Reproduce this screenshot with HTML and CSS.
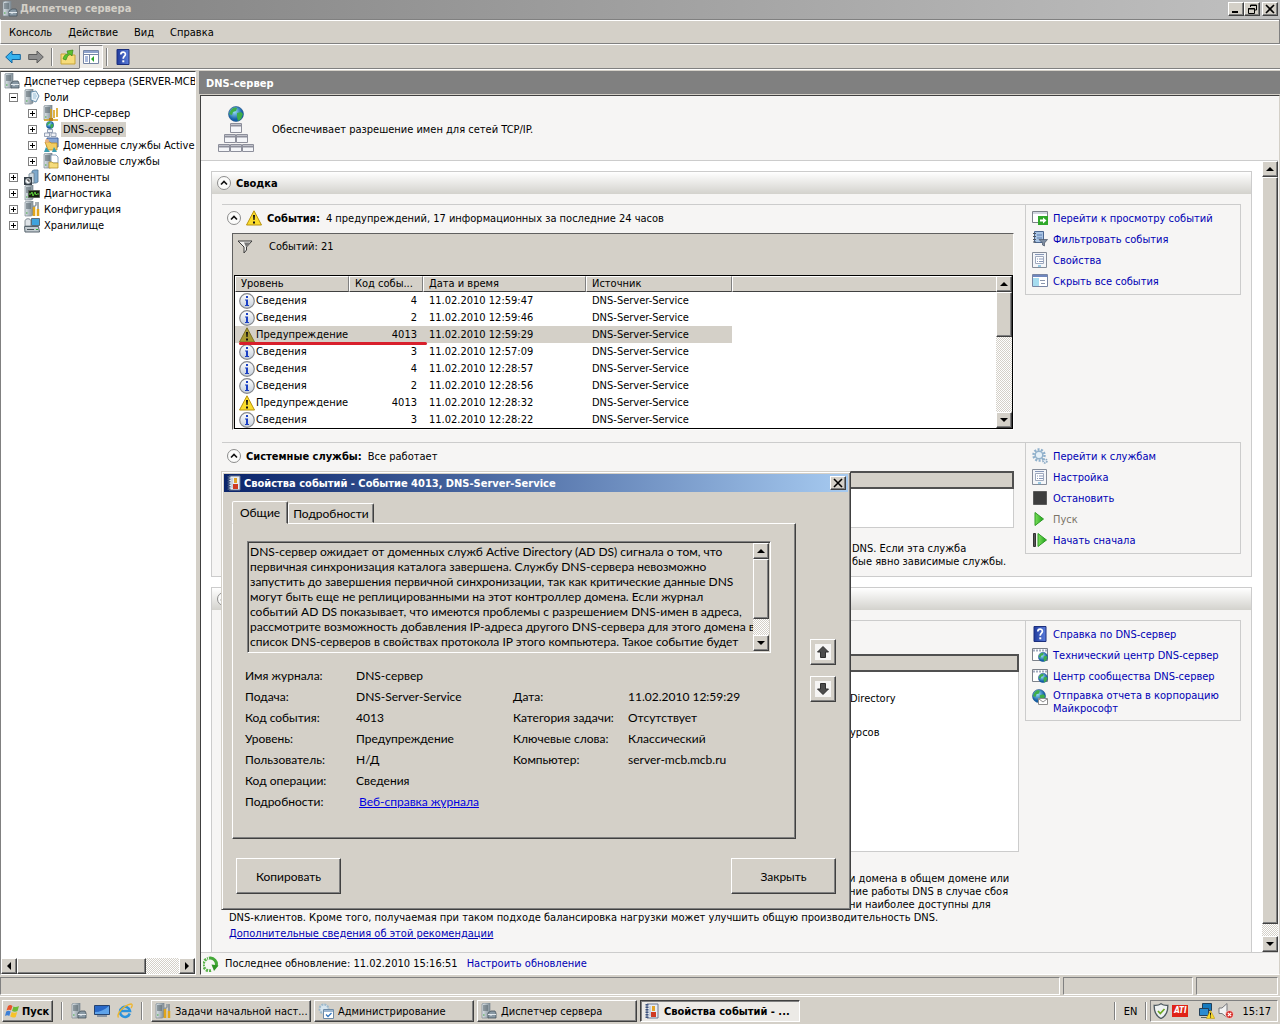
FILE: index.html
```html
<!DOCTYPE html>
<html lang="ru">
<head>
    <meta charset="UTF-8">
    <meta name="viewport" content="width=device-width, initial-scale=1.0">
    <title>Диспетчер сервера</title>
    <link rel="stylesheet" href="styles.css">
</head>
<body>
    <svg class="sprite" aria-hidden="true">
        <defs>
            <linearGradient id="gTower" x1="0" x2="1"><stop offset="0" stop-color="#dfe6ea"/><stop offset="1" stop-color="#7f8d96"/></linearGradient>
            <linearGradient id="gInfo" x1="0" y1="0" x2="0" y2="1"><stop offset="0" stop-color="#fff"/><stop offset="1" stop-color="#c3cdda"/></linearGradient>
            <radialGradient id="gGlobe" cx=".4" cy=".35"><stop offset="0" stop-color="#9be0f5"/><stop offset="1" stop-color="#1560a8"/></radialGradient>
            <linearGradient id="gHelp" x1="0" x2="1"><stop offset="0" stop-color="#203a9c"/><stop offset="1" stop-color="#5c7fdc"/></linearGradient>
            <linearGradient id="gPlay" x1="0" x2="1"><stop offset="0" stop-color="#7ae05a"/><stop offset="1" stop-color="#1fa01a"/></linearGradient>
        </defs>
        <symbol id="tower" viewBox="0 0 16 16">
            <path d="M1 1l2-1h6v14l-2 1H1z" fill="url(#gTower)" stroke="#7b8890" stroke-width=".7"/>
            <path d="M2 3h5M2 5h5M2 7h5" stroke="#4d5a63"/>
            <path d="M2 12h1.500" stroke="#3fa83a"/>
        </symbol>
        <symbol id="globe" viewBox="0 0 16 16">
            <circle cx="8" cy="8" r="7.500" fill="url(#gGlobe)" stroke="#1b4f86" stroke-width=".6"/>
            <path d="M3 4c2-3 5-3 6-2l-1 3-3 1-1 3-3-1zM9 7l4-1 2 2-2 5-3 2-1-4z" fill="#3fae49"/>
        </symbol>
        <symbol id="server" viewBox="0 0 16 16">
            <use href="#tower" width="16" height="16"/>
            <path d="M7 10l3-2h4l1 2v5H7z" fill="#8898a4" stroke="#46545e" stroke-width=".8"/>
            <path d="M7 11.500h8M10 11v2" stroke="#e4eaee"/>
        </symbol>
        <symbol id="roles" viewBox="0 0 16 16">
            <use href="#tower" width="16" height="16"/>
            <path d="M7 3l5-1 3 5-3 6-5-2z" fill="#e9f2f8" stroke="#5d88a6" stroke-width=".9"/>
            <path d="M9 5l3 0M9 7h4M9 9h3" stroke="#86b4cf" stroke-width=".8"/>
        </symbol>
        <symbol id="tools" viewBox="0 0 16 16">
            <use href="#tower" width="16" height="16"/>
            <path d="M8 1v3l2 2 2-2V1" fill="none" stroke="#8c979e" stroke-width="1.500"/>
            <path d="M10 6v9M14 8v7" fill="none" stroke="#e0a51c" stroke-width="2.500"/>
            <path d="M14 1v7" stroke="#707c85" stroke-width="1.300"/>
        </symbol>
        <symbol id="dhcp" viewBox="0 0 16 16">
            <use href="#tower" width="16" height="16"/>
            <path d="M8 4v9M11 5v8M14 3v9M1 15h14" stroke="#d9a21b" stroke-width="1.600"/>
            <path d="M6 13h4v3H6z" fill="#b9821a"/>
        </symbol>
        <symbol id="dns" viewBox="0 0 36 46">
            <use href="#globe" x="10" y="0" width="16" height="16"/>
            <g fill="#f4f5f8" stroke="#8d8f9b"><path d="M12.500 17.500h11v9h-11zM6.500 28.500h11v8h-11zM18.500 28.500h11v8h-11zM.5 38.500h11v7H.5zM12.500 38.500h11v7h-11zM24.500 38.500h11v7h-11z"/></g>
            <path d="M12 19.500h12M6 30.500h24M0 40.500h36" stroke="#8d8f9b" stroke-width="2"/>
        </symbol>
        <symbol id="dnssmall" viewBox="0 0 16 16">
            <use href="#globe" x="3" y="0" width="8" height="8"/>
            <g fill="#eef0f5" stroke="#7f8da6" stroke-width=".8"><path d="M4.500 8.500h5v3h-5zM1.500 12h5v3.500h-5zM8 12h5v3.500H8z"/></g>
        </symbol>
        <symbol id="ad" viewBox="0 0 16 16">
            <path d="M4 1h11v9H4z" fill="#88a5d4" stroke="#42629b"/>
            <path d="M2 5h5l1 1h6v7H5z" fill="#f3cd62" stroke="#bd8b1f" stroke-width=".8"/>
            <circle cx="4" cy="4" r="2" fill="#e9b07c"/><path d="M3 10l4 5H1zM11 10l3 5H9z" fill="#3a9db0"/>
        </symbol>
        <symbol id="files" viewBox="0 0 16 16">
            <use href="#tower" width="16" height="16"/>
            <path d="M8 2h5l2 2v6H8z" fill="#fff" stroke="#6f8ca8" stroke-width=".8"/>
            <path d="M6 9h3l1 1h5v5H6z" fill="#f5dc7c" stroke="#b8962c" stroke-width=".8"/>
        </symbol>
        <symbol id="comp" viewBox="0 0 16 16">
            <path d="M8 2l2-1h4v12l-2 1H8z" fill="#7fa9cc" stroke="#51748f" stroke-width=".8"/>
            <path d="M5 5l2-1h3v10H5z" fill="#cfdbe3" stroke="#70838f" stroke-width=".8"/>
            <path d="M0 8h8v8H0z" fill="#39424a"/><circle cx="4" cy="12" r="2.500" fill="#fff" stroke="#a7b0b7"/><path d="M4 10v2h2" stroke="#222" fill="none"/>
        </symbol>
        <symbol id="diag" viewBox="0 0 16 16">
            <use href="#tower" width="16" height="16"/>
            <path d="M4.500 5.500h11v7h-11z" fill="#15200f" stroke="#5a6258"/>
            <path d="M5 9h2l1-2 1 4 2-4 1 3 1-1h2" fill="none" stroke="#5fd13c"/>
        </symbol>
        <symbol id="stor" viewBox="0 0 16 16">
            <path d="M1 4c0-3 6-3 6 0v5H1z" fill="#dfe4e8" stroke="#68747c" stroke-width=".8"/>
            <path d="M7.500 1.500h8v7h-8z" fill="#3fa3dd" stroke="#5d6d79"/>
            <path d="M.5 9.500h14l1 5.500H1z" fill="#c4ccd1" stroke="#56636c"/><path d="M3 12.500h7" stroke="#4b565d"/><path d="M12 12.500h2" stroke="#2fb02c"/>
        </symbol>
        <symbol id="warn" viewBox="0 0 16 16">
            <path d="M8 .8L15.500 15H.5z" fill="#fbdc2c" stroke="#b8920f" stroke-linejoin="round"/>
            <path d="M7 5h2l-.4 5H7.400zM7 11.500h2v2H7z" fill="#111"/>
        </symbol>
        <symbol id="warnsel" viewBox="0 0 16 16">
            <path d="M8 .8L15.500 15H.5z" fill="#a89a32" stroke="#7e7128" stroke-linejoin="round"/>
            <path d="M7 5h2l-.4 5H7.400zM7 11.500h2v2H7z" fill="#111"/>
        </symbol>
        <symbol id="info" viewBox="0 0 16 16">
            <circle cx="8" cy="8" r="7.300" fill="url(#gInfo)" stroke="#85878c" stroke-width="1.200"/>
            <path d="M7 3h2v2H7zM6 6.500h3V12h1v1H6v-1h1V7.500H6z" fill="#1c41c4"/>
        </symbol>
        <symbol id="help" viewBox="0 0 16 16">
            <path d="M2 .5h12v15H2z" fill="url(#gHelp)" stroke="#1c2f7c"/>
            <path d="M5.800 5.500C5.800 2.300 10.400 2.300 10.400 5.200 10.400 7.200 8.200 7.200 8.200 9.800" fill="none" stroke="#fff" stroke-width="1.700"/>
            <path d="M7.300 11.300h2v2h-2z" fill="#fff"/>
        </symbol>
        <symbol id="chev" viewBox="0 0 14 14">
            <circle cx="7" cy="7" r="6.500" fill="#fbfbfa" stroke="#8c8c8c"/>
            <path d="M4 8.500l3-3 3 3" fill="none" stroke="#111" stroke-width="1.600"/>
        </symbol>
        <symbol id="back" viewBox="0 0 16 16"><path d="M.7 8L7 2v3.500h8.300v5H7V14z" fill="#36b2ee" stroke="#14649e"/></symbol>
        <symbol id="fwd" viewBox="0 0 16 16"><path d="M15.300 8L9 2v3.500H.7v5H9V14z" fill="#8e8e8e" stroke="#5c5c5c"/></symbol>
        <symbol id="folder" viewBox="0 0 16 16">
            <path d="M1 5h5l1 1h8v9H1z" fill="#f7dc7b" stroke="#c7a53a"/>
            <path d="M3 10c1-4 3-5 5-5L7 2l6-1-1 6-2-2c-2 1-3 3-4 6z" fill="#5cc22e" stroke="#2b7d13" stroke-width=".6"/>
        </symbol>
        <symbol id="panel" viewBox="0 0 16 16">
            <path d="M.5 1.500h15v13H.5z" fill="#fff" stroke="#7686a5"/><path d="M1 3h14" stroke="#8ea2cc" stroke-width="2"/>
            <path d="M1 5.500h14M6.500 6v8" stroke="#7686a5"/><path d="M2 8h3M2 10h3M2 12h3" stroke="#5574b8"/><path d="M11 7v6L8 10z" fill="#2aa52a"/>
        </symbol>
        <symbol id="filter" viewBox="0 0 16 16"><path d="M1 2h14L9.500 8v3L7 14V8z" fill="#f1f1ee" stroke="#3b3b3b"/><path d="M7 3.500h6L9 8z" fill="#777"/></symbol>
        <symbol id="goevents" viewBox="0 0 16 16">
            <path d="M.5 1.500h15v11H.5z" fill="#fff" stroke="#7c8189"/><path d="M1 3h14" stroke="#a3abc0"/>
            <path d="M6 6h10v9H6z" fill="#2fa829"/><path d="M8 9.500h3V7.500l3.500 3-3.500 3v-2H8z" fill="#fff"/>
        </symbol>
        <symbol id="filterev" viewBox="0 0 16 16">
            <path d="M2.500.5h9v11h-9z" fill="#a9c4e4" stroke="#4c6790"/><path d="M1 2.500h3M1 5.500h3M1 8.500h3M1 11h3" stroke="#4e5660"/><path d="M5 4h5M5 7h5" stroke="#5f7fae"/>
            <path d="M7 8.500h8.500L12.500 12v3L10.500 14v-2z" fill="#7d8da2" stroke="#4a5565" stroke-width=".7"/>
        </symbol>
        <symbol id="props" viewBox="0 0 16 16">
            <path d="M.5.5h14v15H.5z" fill="#f4f6f9" stroke="#858c99"/><path d="M3.500 4.500h8v7h-8z" fill="#fff" stroke="#9fa9bd"/>
            <path d="M3 2.500h9M5 7h1M7 7h4M5 9.500h1M7 9.500h4" stroke="#8797b8"/><path d="M6 14h3" stroke="#3c9bcb"/>
        </symbol>
        <symbol id="hide" viewBox="0 0 16 16">
            <path d="M.5 1.500h15v12H.5z" fill="#fff" stroke="#7784a3"/><path d="M1 3h14" stroke="#6f86be" stroke-width="2"/>
            <path d="M1 5h6v8H1z" fill="#a6dcef"/><path d="M8 7.500h5M9 10.500h4" stroke="#8b97ae"/>
        </symbol>
        <symbol id="gear" viewBox="0 0 16 16">
            <circle cx="7" cy="7" r="5.500" fill="none" stroke="#8fb0cc" stroke-width="2.500" stroke-dasharray="2 1.400"/>
            <circle cx="7" cy="7" r="3.800" fill="#e6f0f7" stroke="#93b2cb" stroke-width="1.500"/>
            <circle cx="13" cy="13" r="2" fill="#e0eaf2" stroke="#8ca9c2" stroke-width="1.600" stroke-dasharray="1.500 .8"/>
        </symbol>
        <symbol id="stop" viewBox="0 0 16 16"><path d="M1.500 1.500h13v13h-13z" fill="#3e3e3e" stroke="#5b5b5b"/></symbol>
        <symbol id="play" viewBox="0 0 16 16"><path d="M3 1.500L11.500 8 3 14.500z" fill="url(#gPlay)" stroke="#2c9a23"/></symbol>
        <symbol id="restart" viewBox="0 0 16 16"><path d="M1.500 1.500h2v13h-2z" fill="#555" stroke="#333"/><path d="M6 1.500L14.500 8 6 14.500z" fill="url(#gPlay)" stroke="#2c9a23"/></symbol>
        <symbol id="web" viewBox="0 0 16 16">
            <path d="M.5 1.500h15v12H.5z" fill="#fff" stroke="#7c8189"/><path d="M1 3.500h14" stroke="#a3abc0" stroke-width="2" stroke-dasharray="2 1"/>
            <use href="#globe" x="6" y="5" width="10" height="10"/>
        </symbol>
        <symbol id="report" viewBox="0 0 16 16">
            <use href="#globe" x="0" y="0" width="14" height="14"/><path d="M6.500 9.500h9v6h-9z" fill="#fff" stroke="#8c8c8c"/><path d="M7 10l4 3 4-3" fill="none" stroke="#8c8c8c"/>
        </symbol>
        <symbol id="refresh" viewBox="0 0 16 16">
            <path d="M8 14.500A6 6 0 0 1 5 2.500" fill="none" stroke="#57b247" stroke-width="3" stroke-dasharray="2 1"/>
            <path d="M6 2.300a6 6 0 0 1 7 8" fill="none" stroke="#45a838" stroke-width="3"/><path d="M8.500 8.500l7 1-4.500 5.500z" fill="#2f9424"/>
        </symbol>
        <symbol id="journal" viewBox="0 0 16 16">
            <path d="M3 1h11v14H3z" fill="#e7edf4" stroke="#6a7690"/><path d="M3 1v14" stroke="#3e547f" stroke-width="3" stroke-dasharray="1.500 1"/>
            <path d="M8 3h3v5H8z" fill="#e2a42a"/><path d="M7 9h5v5H7z" fill="#cf3a22"/><path d="M6 3v10" stroke="#a9b6c8"/>
        </symbol>
        <symbol id="admin" viewBox="0 0 16 16">
            <circle cx="6" cy="6" r="4.500" fill="#d7e5ee" stroke="#9cb9cc" stroke-width="2" stroke-dasharray="2 1"/>
            <path d="M5.500 6.500h10v9h-10z" fill="#fff" stroke="#6d8aa6"/><path d="M6 8h9" stroke="#9cb7d2" stroke-width="2"/><path d="M8 11.500l2 2 3.500-3.500" fill="none" stroke="#3577be" stroke-width="1.300"/>
        </symbol>
        <symbol id="flag" viewBox="0 0 16 16">
            <path d="M3 3c2-1.500 3-1 4.500 0L6 7.500C5 6.500 3 6.500 1.500 7.500z" fill="#e8532a"/><path d="M8.500 3.500c2 1 3.500.5 5.500-.5l-1.500 5c-2 1-3.500 1-5.500 0z" fill="#6cba36"/>
            <path d="M1.200 8.500c1.500-1 3-1 4.500 0L4.300 13C3 12 1.500 12 0 13z" fill="#3c7fd6"/><path d="M6.700 9c2 1 3.500 1 5.500 0l-1.500 5c-2 1-3.500.5-5.500-.5z" fill="#f6c22b"/>
        </symbol>
        <symbol id="desk" viewBox="0 0 16 16"><path d="M.5 2.500h15v9H.5z" fill="#2867c7" stroke="#26436f"/><path d="M1 9c5 0 9-2 14-6v8H1z" fill="#5fa3ea"/><path d="M3 13h10" stroke="#8a95a3" stroke-width="2"/></symbol>
        <symbol id="ie" viewBox="0 0 16 16">
            <path d="M12.800 10.500A5 5 0 1 1 13 8H4" fill="none" stroke="#2b93dc" stroke-width="2.500"/>
            <path d="M1.500 14.500C-1 11 7 2 14 1c2 0 1 3 0 4" fill="none" stroke="#efb52b" stroke-width="1.300"/>
        </symbol>
        <symbol id="shield" viewBox="0 0 16 16"><path d="M8 .7c2 1.500 4.500 1.800 6.800 1.600C15 8 13 13 8 15.500 3 13 1 8 1.200 2.300 3.500 2.500 6 2.200 8 .7z" fill="#eef1f2" stroke="#4e5a60" stroke-width="1.300"/><path d="M5 8l2.300 2.500L11.500 6" fill="none" stroke="#6da820" stroke-width="1.700"/></symbol>
        <symbol id="net" viewBox="0 0 16 16"><path d="M3.500.5h9v7h-9z" fill="#1479be" stroke="#23405a"/><path d="M.5 5.500h9v7h-9z" fill="#2a8bd0" stroke="#23405a"/><path d="M2 14.500h6" stroke="#566"/><use href="#warn" x="7" y="7" width="9" height="9"/></symbol>
        <symbol id="sound" viewBox="0 0 16 16"><path d="M1 5h3l5-4.500v14L4 10.500H1z" fill="#f2f2f2" stroke="#77797c"/><circle cx="11.500" cy="11.500" r="4" fill="#d62f2a" stroke="#fff" stroke-width=".6"/><path d="M9.800 9.800l3.400 3.400M13.200 9.800l-3.400 3.400" stroke="#fff" stroke-width="1.200"/></symbol>
        <symbol id="up" viewBox="0 0 16 16"><path d="M8 2.500L13.500 8h-3v5.500h-5V8h-3z" fill="#4c4c4c" stroke="#2e2e2e"/></symbol>
        <symbol id="down" viewBox="0 0 16 16"><path d="M8 13.500L2.500 8h3V2.500h5V8h3z" fill="#4c4c4c" stroke="#2e2e2e"/></symbol>
        <symbol id="close" viewBox="0 0 12 10"><path d="M2 1l8 8M10 1L2 9" stroke="#000" stroke-width="1.600"/></symbol>
    </svg>

    <header class="titlebar">
        <svg class="icon"><use href="#server"/></svg>
        <h1>Диспетчер сервера</h1>
        <div class="winbuttons">
            <button class="winbtn" aria-label="Свернуть"><svg viewBox="0 0 12 10"><path d="M2 8h6" stroke="#000" stroke-width="2"/></svg></button>
            <button class="winbtn" aria-label="Восстановить"><svg viewBox="0 0 12 10"><path d="M4.500 3V1h6v5h-2M2.500 4.500h6v5h-6zM2 5h7M4 1.500h7" fill="none" stroke="#000"/></svg></button>
            <button class="winbtn winclose" aria-label="Закрыть окно"><svg><use href="#close"/></svg></button>
        </div>
    </header>
    <nav class="menubar">
        <button>Консоль</button>
        <button>Действие</button>
        <button>Вид</button>
        <button>Справка</button>
    </nav>
    <div class="toolbar">
        <button aria-label="Назад"><svg class="icon"><use href="#back"/></svg></button>
        <button aria-label="Вперед"><svg class="icon"><use href="#fwd"/></svg></button>
        <span class="sep"></span>
        <button aria-label="Вверх"><svg class="icon"><use href="#folder"/></svg></button>
        <button class="pressed" aria-label="Дерево консоли"><svg class="icon"><use href="#panel"/></svg></button>
        <span class="sep"></span>
        <button aria-label="Помощь"><svg class="icon"><use href="#help"/></svg></button>
    </div>

    <div class="workspace">
        <aside class="treepane">
            <ul class="tree">
                <li class="root"><svg class="icon"><use href="#server"/></svg><span>Диспетчер сервера (SERVER-MCB)</span></li>
                <li class="lvl1"><button class="exp open" aria-label="Свернуть Роли"></button><svg class="icon"><use href="#roles"/></svg><span>Роли</span></li>
                <li class="lvl2"><button class="exp" aria-label="Развернуть"></button><svg class="icon"><use href="#dhcp"/></svg><span>DHCP-сервер</span></li>
                <li class="lvl2"><button class="exp" aria-label="Развернуть"></button><svg class="icon"><use href="#dnssmall"/></svg><span class="selected">DNS-сервер</span></li>
                <li class="lvl2"><button class="exp" aria-label="Развернуть"></button><svg class="icon"><use href="#ad"/></svg><span>Доменные службы Active Directory</span></li>
                <li class="lvl2"><button class="exp" aria-label="Развернуть"></button><svg class="icon"><use href="#files"/></svg><span>Файловые службы</span></li>
                <li class="lvl1"><button class="exp" aria-label="Развернуть"></button><svg class="icon"><use href="#comp"/></svg><span>Компоненты</span></li>
                <li class="lvl1"><button class="exp" aria-label="Развернуть"></button><svg class="icon"><use href="#diag"/></svg><span>Диагностика</span></li>
                <li class="lvl1"><button class="exp" aria-label="Развернуть"></button><svg class="icon"><use href="#tools"/></svg><span>Конфигурация</span></li>
                <li class="lvl1"><button class="exp" aria-label="Развернуть"></button><svg class="icon"><use href="#stor"/></svg><span>Хранилище</span></li>
            </ul>
            <div class="hscroll">
                <button class="sbtn left" aria-label="Влево"></button>
                <div class="thumb"></div>
                <div class="track"></div>
                <button class="sbtn right" aria-label="Вправо"></button>
            </div>
        </aside>

        <main class="content">
            <h2 class="panetitle">DNS-сервер</h2>
            <div class="pane">
                <div class="intro">
                    <svg class="bigicon"><use href="#dns"/></svg>
                    <p>Обеспечивает разрешение имен для сетей TCP/IP.</p>
                </div>
                <div class="scrollarea">
                    <div class="sections">
                        <section class="section">
                            <h3 class="sectionhead"><button class="chev" aria-label="Свернуть сводку"><svg><use href="#chev"/></svg></button>Сводка</h3>
                            <div class="group events">
                                <div class="groupmain">
                                    <div class="grouphead">
                                        <button class="chev" aria-label="Свернуть события"><svg><use href="#chev"/></svg></button>
                                        <svg class="icon"><use href="#warn"/></svg>
                                        <b>События:</b>
                                        <span>4 предупреждений, 17 информационных за последние 24 часов</span>
                                    </div>
                                    <div class="eventbox">
                                        <div class="filterbar"><svg class="icon"><use href="#filter"/></svg>Событий: 21</div>
                                        <div class="listview">
                                            <table>
                                                <colgroup><col class="c1"><col class="c2"><col class="c3"><col class="c4"><col></colgroup>
                                                <thead>
                                                    <tr><th>Уровень</th><th>Код собы...</th><th>Дата и время</th><th>Источник</th><th></th></tr>
                                                </thead>
                                                <tbody>
                                                    <tr><td><svg class="icon"><use href="#info"/></svg>Сведения</td><td>4</td><td>11.02.2010 12:59:47</td><td>DNS-Server-Service</td><td></td></tr>
                                                    <tr><td><svg class="icon"><use href="#info"/></svg>Сведения</td><td>2</td><td>11.02.2010 12:59:46</td><td>DNS-Server-Service</td><td></td></tr>
                                                    <tr class="current"><td><svg class="icon"><use href="#warnsel"/></svg>Предупреждение</td><td>4013</td><td>11.02.2010 12:59:29</td><td>DNS-Server-Service</td><td></td></tr>
                                                    <tr><td><svg class="icon"><use href="#info"/></svg>Сведения</td><td>3</td><td>11.02.2010 12:57:09</td><td>DNS-Server-Service</td><td></td></tr>
                                                    <tr><td><svg class="icon"><use href="#info"/></svg>Сведения</td><td>4</td><td>11.02.2010 12:28:57</td><td>DNS-Server-Service</td><td></td></tr>
                                                    <tr><td><svg class="icon"><use href="#info"/></svg>Сведения</td><td>2</td><td>11.02.2010 12:28:56</td><td>DNS-Server-Service</td><td></td></tr>
                                                    <tr><td><svg class="icon"><use href="#warn"/></svg>Предупреждение</td><td>4013</td><td>11.02.2010 12:28:32</td><td>DNS-Server-Service</td><td></td></tr>
                                                    <tr><td><svg class="icon"><use href="#info"/></svg>Сведения</td><td>3</td><td>11.02.2010 12:28:22</td><td>DNS-Server-Service</td><td></td></tr>
                                                </tbody>
                                            </table>
                                            <div class="vscroll">
                                                <button class="sbtn up" aria-label="Вверх по списку"></button>
                                                <div class="thumb"></div>
                                                <div class="track"></div>
                                                <button class="sbtn down" aria-label="Вниз по списку"></button>
                                            </div>
                                        </div>
                                    </div>
                                </div>
                                <ul class="links">
                                    <li><svg class="icon"><use href="#goevents"/></svg><a href="#">Перейти к просмотру событий</a></li>
                                    <li><svg class="icon"><use href="#filterev"/></svg><a href="#">Фильтровать события</a></li>
                                    <li><svg class="icon"><use href="#props"/></svg><a href="#">Свойства</a></li>
                                    <li><svg class="icon"><use href="#hide"/></svg><a href="#">Скрыть все события</a></li>
                                </ul>
                            </div>
                            <div class="group services">
                                <div class="groupmain">
                                    <div class="grouphead">
                                        <button class="chev" aria-label="Свернуть службы"><svg><use href="#chev"/></svg></button>
                                        <b>Системные службы:</b>
                                        <span>Все работает</span>
                                    </div>
                                    <div class="whitebox"><div class="boxhead"></div></div>
                                    <p class="tail">DNS. Если эта служба<br>бые явно зависимые службы.</p>
                                </div>
                                <ul class="links">
                                    <li><svg class="icon"><use href="#gear"/></svg><a href="#">Перейти к службам</a></li>
                                    <li><svg class="icon"><use href="#props"/></svg><a href="#">Настройка</a></li>
                                    <li><svg class="icon"><use href="#stop"/></svg><a href="#">Остановить</a></li>
                                    <li><svg class="icon"><use href="#play"/></svg><span class="off">Пуск</span></li>
                                    <li><svg class="icon"><use href="#restart"/></svg><a href="#">Начать сначала</a></li>
                                </ul>
                            </div>
                        </section>

                        <section class="section">
                            <h3 class="sectionhead"><button class="chev" aria-label="Свернуть ресурсы"><svg><use href="#chev"/></svg></button></h3>
                            <div class="group resources">
                                <div class="groupmain">
                                    <div class="whitebox">
                                        <div class="boxhead"></div>
                                        <p class="tail">Directory</p>
                                        <p class="tail">урсов</p>
                                    </div>
                                    <p class="tail">и домена в общем домене или<br>ние работы DNS в случае сбоя<br>ни наиболее доступны для</p>
                                    <p class="note">DNS-клиентов. Кроме того, получаемая при таком подходе балансировка нагрузки может улучшить общую производительность DNS.</p>
                                    <a class="more" href="#">Дополнительные сведения об этой рекомендации</a>
                                </div>
                                <ul class="links">
                                    <li><svg class="icon"><use href="#help"/></svg><a href="#">Справка по DNS-сервер</a></li>
                                    <li><svg class="icon"><use href="#web"/></svg><a href="#">Технический центр DNS-сервер</a></li>
                                    <li><svg class="icon"><use href="#web"/></svg><a href="#">Центр сообщества DNS-сервер</a></li>
                                    <li class="twoline"><svg class="icon"><use href="#report"/></svg><a href="#">Отправка отчета в корпорацию Майкрософт</a></li>
                                </ul>
                            </div>
                        </section>
                    </div>
                    <div class="vscroll">
                        <button class="sbtn up" aria-label="Вверх по странице"></button>
                        <div class="thumb"></div>
                        <div class="track"></div>
                        <button class="sbtn down" aria-label="Вниз по странице"></button>
                    </div>
                </div>
                <footer class="updated">
                    <svg class="icon"><use href="#refresh"/></svg>
                    <span>Последнее обновление: 11.02.2010 15:16:51</span>
                    <a href="#">Настроить обновление</a>
                </footer>
            </div>
        </main>
    </div>

    <div class="statusbar"><span></span><span></span><span></span></div>

    <footer class="taskbar">
        <button class="start"><svg class="icon"><use href="#flag"/></svg>Пуск</button>
        <span class="sep"></span>
        <div class="quick">
            <button aria-label="Сервер"><svg class="icon"><use href="#server"/></svg></button>
            <button aria-label="Рабочий стол"><svg class="icon"><use href="#desk"/></svg></button>
            <button aria-label="Обозреватель"><svg class="icon"><use href="#ie"/></svg></button>
        </div>
        <span class="sep"></span>
        <div class="tasks">
            <button><svg class="icon"><use href="#tools"/></svg>Задачи начальной наст...</button>
            <button><svg class="icon"><use href="#admin"/></svg>Администрирование</button>
            <button><svg class="icon"><use href="#server"/></svg>Диспетчер сервера</button>
            <button class="active"><svg class="icon"><use href="#journal"/></svg>Свойства событий - ...</button>
        </div>
        <span class="sep"></span>
        <span class="lang">EN</span>
        <span class="sep"></span>
        <div class="tray">
            <svg class="icon"><use href="#shield"/></svg>
            <span class="ati">ATI</span>
            <svg class="icon net"><use href="#net"/></svg>
            <svg class="icon"><use href="#sound"/></svg>
            <time>15:17</time>
        </div>
    </footer>

    <div class="dialog" role="dialog" aria-labelledby="dlgtitle">
        <div class="dlgtitle">
            <svg class="icon"><use href="#journal"/></svg>
            <h2 id="dlgtitle">Свойства событий - Событие 4013, DNS-Server-Service</h2>
            <button class="winbtn" aria-label="Закрыть диалог"><svg><use href="#close"/></svg></button>
        </div>
        <div class="dlgbody">
            <div class="tabs" role="tablist">
                <button class="tab on" role="tab">Общие</button>
                <button class="tab" role="tab">Подробности</button>
            </div>
            <div class="tabrow">
                <div class="tabpanel">
                    <div class="message">
                        <textarea readonly wrap="off" aria-label="Описание события">DNS-сервер ожидает от доменных служб Active Directory (AD DS) сигнала о том, что
первичная синхронизация каталога завершена. Службу DNS-сервера невозможно
запустить до завершения первичной синхронизации, так как критические данные DNS
могут быть еще не реплицированными на этот контроллер домена. Если журнал
событий AD DS показывает, что имеются проблемы с разрешением DNS-имен в адреса,
рассмотрите возможность добавления IP-адреса другого DNS-сервера для этого домена в
список DNS-серверов в свойствах протокола IP этого компьютера. Такое событие будет</textarea>
                        <div class="vscroll">
                            <button class="sbtn up" aria-label="Вверх по тексту"></button>
                            <div class="thumb"></div>
                            <div class="track"></div>
                            <button class="sbtn down" aria-label="Вниз по тексту"></button>
                        </div>
                    </div>
                    <dl class="fields">
                        <dt>Имя журнала:</dt><dd class="wide">DNS-сервер</dd>
                        <dt>Подача:</dt><dd>DNS-Server-Service</dd><dt>Дата:</dt><dd>11.02.2010 12:59:29</dd>
                        <dt>Код события:</dt><dd>4013</dd><dt>Категория задачи:</dt><dd>Отсутствует</dd>
                        <dt>Уровень:</dt><dd>Предупреждение</dd><dt>Ключевые слова:</dt><dd>Классический</dd>
                        <dt>Пользователь:</dt><dd>Н/Д</dd><dt>Компьютер:</dt><dd>server-mcb.mcb.ru</dd>
                        <dt>Код операции:</dt><dd class="wide">Сведения</dd>
                        <dt>Подробности:</dt><dd class="wide weblink"><a href="#">Веб-справка журнала</a></dd>
                    </dl>
                </div>
                <div class="stepper">
                    <button aria-label="Предыдущее событие"><svg><use href="#up"/></svg></button>
                    <button aria-label="Следующее событие"><svg><use href="#down"/></svg></button>
                </div>
            </div>
            <div class="dlgbuttons">
                <button>Копировать</button>
                <button>Закрыть</button>
            </div>
        </div>
    </div>
</body>
</html>
```
FILE: styles.css
```css
*{
    box-sizing: border-box;
    margin: 0;
    padding: 0;
}

body{
    display: flex;
    flex-direction: column;
    height: 100vh;
    overflow: hidden;
    background: #d4d0c8;
    color: #000;
    font: 11px/13px "DejaVu Sans Condensed", Tahoma, sans-serif;
}

button{
    font: inherit;
    color: inherit;
    border: none;
    background: none;
}

ul{
    list-style: none;
}

.sprite{
    position: absolute;
    width: 0;
    height: 0;
}

.icon{
    width: 16px;
    height: 16px;
    flex: none;
}

a{
    color: #0000b4;
    text-decoration: none;
}

/* title bar */
.titlebar{
    display: flex;
    align-items: center;
    gap: 2px;
    height: 19px;
    padding: 0 2px 2px;
    background: linear-gradient(to right, #808080, #c0c0c0);
}

.titlebar h1{
    flex: 1;
    font-size: 11px;
    color: #d4d0c8;
}

.winbuttons{
    display: flex;
}

.winbtn{
    width: 16px;
    height: 14px;
    display: flex;
    align-items: center;
    justify-content: center;
}

.winbtn svg{
    width: 12px;
    height: 10px;
}

.winclose{
    margin-left: 2px;
}

.winbtn, .sbtn, .thumb, .start, .tasks button, .stepper button, .dlgbuttons button{
    background: #d4d0c8;
    border: 1px solid;
    border-color: #fff #404040 #404040 #fff;
    box-shadow: inset -1px -1px #808080;
}

/* menu and toolbar */
.menubar{
    display: flex;
    gap: 16px;
    height: 25px;
    padding: 2px 8px 0;
    border: 1px solid;
    border-color: #808080 #808080 #808080 #fff;
    box-shadow: inset 0 1px #fff;
}

.toolbar{
    display: flex;
    align-items: center;
    gap: 7px;
    height: 25px;
    padding: 0 5px;
    border-top: 1px solid #fff;
    border-bottom: 1px solid #808080;
}

.toolbar button{
    display: flex;
}

.toolbar .pressed{
    padding: 3px;
    margin: 0 -4px;
    background: #efedea;
    border: 1px solid;
    border-color: #808080 #fff #fff #808080;
}

.sep{
    width: 2px;
    height: 18px;
    border-left: 1px solid #808080;
    border-right: 1px solid #fff;
}

.workspace{
    display: flex;
    flex: 1;
    min-height: 0;
    padding-top: 1px;
    border-top: 1px solid #fff;
}

/* tree */
.treepane{
    display: flex;
    flex-direction: column;
    width: 196px;
    background: #fff;
    border: 1px solid;
    border-color: #404040 #fff #fff #808080;
}

.tree{
    flex: 1;
    padding-top: 1px;
    overflow: hidden;
}

.tree li{
    display: flex;
    align-items: center;
    gap: 4px;
    height: 16px;
    white-space: nowrap;
}

.tree .root{
    padding-left: 3px;
}

.tree .lvl1{
    padding-left: 8px;
}

.tree .lvl2{
    padding-left: 27px;
}

.exp{
    flex: none;
    width: 9px;
    height: 9px;
    margin-right: 2px;
    border: 1px solid #808080;
    background: linear-gradient(#000, #000) center / 5px 1px no-repeat, linear-gradient(#000, #000) center / 1px 5px no-repeat;
}

.exp.open{
    background: linear-gradient(#000, #000) center / 5px 1px no-repeat;
}

.selected{
    background: #d4d0c8;
    padding: 1px 2px;
    margin-left: -2px;
}

/* scrollbars */
.hscroll, .vscroll{
    display: flex;
    flex: none;
    background: repeating-conic-gradient(#fff 0 25%, #d4d0c8 0 50%) 0 0 / 2px 2px;
}

.vscroll{
    flex-direction: column;
    width: 16px;
}

.hscroll{
    height: 16px;
}

.sbtn{
    display: flex;
    align-items: center;
    justify-content: center;
    width: 16px;
    height: 16px;
    flex: none;
}

.sbtn::before{
    content: "";
    border: 4px solid transparent;
}

.sbtn.up::before{
    border-top: none;
    border-bottom-color: #000;
}

.sbtn.down::before{
    border-bottom: none;
    border-top-color: #000;
}

.sbtn.left::before{
    border-left: none;
    border-right-color: #000;
}

.sbtn.right::before{
    border-right: none;
    border-left-color: #000;
}

.track{
    flex: 1;
}

.hscroll .thumb{
    width: 129px;
}

/* right side */
.content{
    display: flex;
    flex-direction: column;
    flex: 1;
    min-width: 0;
    margin-left: 3px;
}

.panetitle{
    height: 23px;
    padding-left: 7px;
    background: #808080;
    color: #fff;
    font-size: 11px;
    line-height: 25px;
}

.pane{
    display: flex;
    flex-direction: column;
    flex: 1;
    min-height: 0;
    margin: 1px 0 0 1px;
    padding-right: 1px;
    background: #f6f5f4;
    border: 1px solid;
    border-color: #404040 #d4d0c8 #fff #404040;
}

.intro{
    display: flex;
    align-items: center;
    gap: 18px;
    height: 65px;
    padding: 2px 0 0 17px;
    border-bottom: 1px solid #ccc;
}

.bigicon{
    width: 36px;
    height: 48px;
}

.scrollarea{
    display: flex;
    flex: 1;
    min-height: 0;
    background: #fff;
}

.sections{
    flex: 1;
    min-width: 0;
    overflow: hidden;
    padding: 10px 10px 0 10px;
}

.scrollarea > .vscroll .thumb{
    flex: 1;
}

.scrollarea > .vscroll .track{
    flex: 0 0 12px;
}

.section{
    margin-bottom: 10px;
    padding-bottom: 8px;
    background: #f6f5f4;
    border: 1px solid #ccc;
}

.section:last-child{
    padding-bottom: 22px;
}

.sectionhead{
    display: flex;
    align-items: center;
    gap: 5px;
    height: 22px;
    padding-left: 5px;
    background: linear-gradient(#fff, #d3d2cd);
    font-size: 11px;
}

.chev{
    display: flex;
}

.chev svg{
    width: 14px;
    height: 14px;
}

.group{
    display: grid;
    grid-template-columns: minmax(0, 1fr) 216px;
    align-items: start;
    margin: 10px 10px 0;
    border-top: 1px solid #ccc;
}

.groupmain{
    padding: 0 11px 0 10px;
}

.grouphead{
    display: flex;
    align-items: center;
    gap: 5px;
    height: 28px;
    padding-bottom: 2px;
    margin-left: -5px;
}

.grouphead b{
    margin-right: 1px;
}

.services{
    margin-top: 12px;
}

.links{
    display: flex;
    flex-direction: column;
    gap: 5px;
    padding: 5px 6px;
    border: 1px solid #ccc;
    border-top: none;
}

.links li{
    display: flex;
    align-items: center;
    gap: 5px;
    min-height: 16px;
}

.links .twoline{
    align-items: start;
}

.off{
    color: #7b7468;
}

.eventbox{
    background: #d4d0c8;
    border: 1px solid;
    border-color: #606060 #fff #fff #606060;
    padding: 1px 0 0 1px;
}

.filterbar{
    display: flex;
    align-items: start;
    gap: 16px;
    height: 40px;
    padding: 4px 3px;
    line-height: 16px;
}

.listview{
    display: flex;
    background: #fff;
    border: 1px solid #000;
}

.listview .thumb{
    height: 45px;
}

table{
    flex: 1;
    width: 100%;
    min-width: 0;
    table-layout: fixed;
    border-collapse: separate;
    border-spacing: 0;
}

.c1{
    width: 114px;
}

.c2{
    width: 74px;
}

.c3{
    width: 163px;
}

.c4{
    width: 146px;
}

th{
    height: 16px;
    padding: 0 5px;
    background: #d4d0c8;
    border: 1px solid;
    border-color: #fff #808080 #404040 #fff;
    font-weight: normal;
    text-align: left;
    line-height: 14px;
    white-space: nowrap;
}

th:last-child{
    border-right: none;
}

td{
    height: 17px;
    padding: 0 6px;
    white-space: nowrap;
}

td:first-child{
    display: flex;
    align-items: center;
    gap: 1px;
    padding: 0 4px;
    position: relative;
}

td:nth-child(2){
    text-align: right;
}

.current td:not(:last-child){
    background: #d4d0c8;
}

/* red marker under the event */
.current td:first-child::after{
    content: "";
    position: absolute;
    z-index: 1;
    left: 4px;
    top: 16px;
    width: 188px;
    height: 3px;
    border-radius: 2px;
    background: #d8202c;
}

.whitebox{
    background: #fff;
    border: 1px solid #ccc;
}

.boxhead{
    height: 18px;
    margin: -1px;
    background: #d4d0c8;
    border: 2px solid #505050;
}

.services .whitebox{
    height: 57px;
}

.tail{
    padding-left: 620px;
    white-space: nowrap;
}

.services .tail{
    padding-top: 14px;
}

.resources .groupmain{
    padding: 33px 6px 0 7px;
}

.resources .whitebox{
    height: 198px;
    margin-bottom: 20px;
}

.whitebox .tail{
    padding-top: 21px;
}

.note{
    white-space: nowrap;
}

.more{
    display: inline-block;
    margin-top: 3px;
    text-decoration: underline;
}

.updated{
    display: flex;
    align-items: center;
    gap: 6px;
    height: 22px;
    padding-left: 2px;
    border-top: 1px solid #ccc;
}

.updated a{
    margin-left: 3px;
}

/* status bar and taskbar */
.statusbar{
    display: grid;
    grid-template-columns: 1fr 130px 82px;
    gap: 3px;
    height: 21px;
    padding: 2px 2px 1px 0;
}

.statusbar span{
    border: 1px solid;
    border-color: #808080 #fff #fff #808080;
}

.taskbar{
    display: flex;
    align-items: center;
    gap: 8px;
    height: 28px;
    padding: 1px 2px 0;
    border-top: 1px solid #fff;
}

.start{
    display: flex;
    align-items: center;
    gap: 1px;
    width: 51px;
    height: 22px;
    padding-left: 2px;
    font-weight: bold;
}

.quick{
    display: flex;
    gap: 7px;
}

.quick button{
    display: flex;
}

.tasks{
    display: flex;
    flex: 1;
    gap: 3px;
    min-width: 0;
}

.tasks button{
    display: flex;
    align-items: center;
    gap: 4px;
    width: 160px;
    height: 22px;
    padding: 0 3px;
    white-space: nowrap;
}

.tasks .active{
    background: #eceae6;
    border-color: #404040 #fff #fff #404040;
    box-shadow: inset 1px 1px #808080;
    font-weight: bold;
}

.tray{
    display: flex;
    align-items: center;
    gap: 3px;
    height: 22px;
    margin-left: -5px;
    padding: 0 6px 0 2px;
    border: 1px solid;
    border-color: #808080 #fff #fff #808080;
}

.ati{
    width: 16px;
    background: #e02318;
    color: #fff;
    font-size: 8px;
    font-style: italic;
    font-weight: bold;
    line-height: 12px;
    text-align: center;
}

.net{
    margin-left: 8px;
}

.tray time{
    margin-left: 5px;
}

/* event window */
.dialog{
    position: absolute;
    left: 221px;
    top: 471px;
    width: 630px;
    padding: 2px;
    background: #d4d0c8;
    border: 1px solid;
    border-color: #d4d0c8 #404040 #404040 #d4d0c8;
    box-shadow: inset 1px 1px #fff, inset -1px -1px #808080;
}

.dlgtitle{
    display: flex;
    align-items: center;
    gap: 2px;
    height: 18px;
    padding: 0 2px;
    background: linear-gradient(to right, #0a246a, #a6caf0);
    color: #fff;
}

.dlgtitle h2{
    flex: 1;
    font-size: 11px;
}

.dlgbody{
    padding: 9px 12px 13px 8px;
    font: 12px/15px Lato, "Segoe UI", sans-serif;
}

.tabs{
    display: flex;
    align-items: end;
    height: 22px;
}

.tab{
    height: 20px;
    padding: 0 4px;
    border: 1px solid;
    border-color: #fff #404040 transparent #fff;
    border-radius: 2px 2px 0 0;
    box-shadow: inset -1px 0 #808080;
}

.tab.on{
    height: 23px;
    padding: 0 7px;
    margin-bottom: -1px;
    background: #d4d0c8;
    position: relative;
}

.tabrow{
    display: flex;
    gap: 14px;
}

.tabpanel{
    flex: 1;
    height: 316px;
    padding: 17px 24px 0 14px;
    border: 1px solid;
    border-color: #fff #404040 #404040 #fff;
    box-shadow: inset -1px -1px #808080;
}

.message{
    display: flex;
    height: 112px;
    border: 1px solid;
    border-color: #808080 #fff #fff #808080;
    box-shadow: inset 1px 1px #404040;
    padding: 1px;
}

textarea{
    flex: 1;
    min-width: 0;
    padding: 1px;
    border: none;
    background: none;
    font: inherit;
    overflow: hidden;
    resize: none;
}

.message .thumb{
    height: 60px;
}

.fields{
    display: grid;
    grid-template-columns: 111px 157px 115px 1fr;
    grid-auto-rows: 21px;
    margin: 12px -20px 0 -2px;
    line-height: 21px;
    white-space: nowrap;
}

.wide{
    grid-column: span 3;
}

.weblink{
    padding-left: 3px;
}

.fields a{
    color: #0000e0;
    text-decoration: underline;
}

.stepper{
    display: flex;
    flex-direction: column;
    gap: 11px;
    padding-top: 116px;
}

.stepper button{
    display: flex;
    align-items: center;
    justify-content: center;
    width: 26px;
    height: 26px;
}

.stepper svg{
    width: 16px;
    height: 16px;
    background: #f6f5f4;
}

.dlgbuttons{
    display: flex;
    justify-content: space-between;
    margin: 19px 0 0 4px;
}

.dlgbuttons button{
    width: 105px;
    height: 36px;
}
```
